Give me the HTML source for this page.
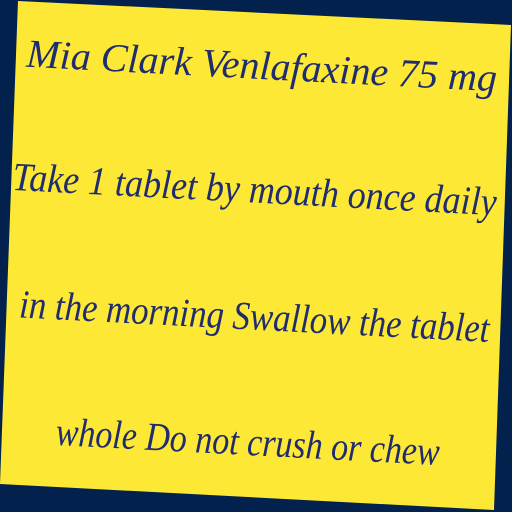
<!DOCTYPE html>
<html><head><style>
html,body{margin:0;padding:0;width:512px;height:512px;overflow:hidden;background:#02214d;}
.card{position:absolute;left:0;top:0;width:512px;height:512px;background:#fde835;
clip-path:polygon(18px 1px,511px 25px,494px 510px,0px 484px);}
.l{position:absolute;left:0;width:512px;text-align:center;white-space:nowrap;
font-family:"Liberation Serif",serif;font-style:italic;color:#1f2c6e;font-size:40px;
transform-origin:256px 20px;}
</style></head><body>
<div class="card"></div>
<div class="l" style="top:42px;transform:translateX(6px) rotate(3deg) scaleX(1.0);">Mia Clark Venlafaxine 75 mg</div>
<div class="l" style="top:165px;transform:translateX(-13px) rotate(3deg) scaleX(0.9);">Take 1 tablet by mouth once daily</div>
<div class="l" style="top:292px;transform:translateX(-14px) rotate(3deg) scaleX(0.87);">in the morning Swallow the tablet</div>
<div class="l" style="top:418px;transform:translateX(-8px) rotate(3deg) scaleX(0.85);">whole Do not crush or chew</div>
</body></html>
